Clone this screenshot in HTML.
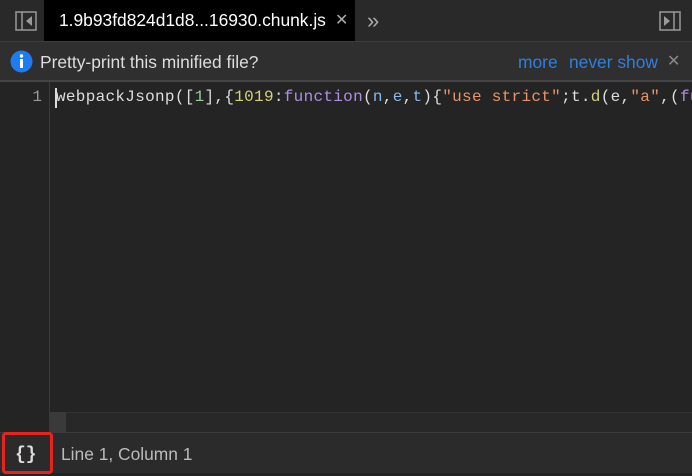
<!DOCTYPE html>
<html><head><style>
body{margin:0;width:692px;height:472px;overflow:hidden;background:#242424;font-family:"Segoe UI","Liberation Sans",sans-serif;position:relative}
.tabs{position:absolute;left:0;top:0;width:692px;height:41px;background:#292929;border-bottom:1px solid #3c3c3c}
.tab{position:absolute;left:44px;top:0;width:311px;height:41px;background:#000;color:#fff;font-size:17.4px;line-height:41px}
.info{position:absolute;left:0;top:42px;width:692px;height:38px;background:#2f2f2f;border-bottom:2px solid #454545;color:#ddd;font-size:17.4px;line-height:40px}
.gutter{position:absolute;left:0;top:82px;width:49px;height:350px;background:#242424;border-right:1px solid #3a3a3a}
.code{position:absolute;left:56px;top:88px;font-family:"Liberation Mono",monospace;font-size:16px;letter-spacing:0.3px;color:#ddd;white-space:pre}
.status{position:absolute;left:0;top:432px;width:692px;height:40px;background:#2b2b2b;border-top:1px solid #3c3c3c;color:#bbb;font-size:17.4px;line-height:42px}
</style></head><body>
<div class="tabs">
<svg style="position:absolute;left:15px;top:11px" width="22" height="20"><rect x="1" y="1" width="20" height="18" fill="none" stroke="#999" stroke-width="1.5"/><line x1="7" y1="1" x2="7" y2="19" stroke="#999" stroke-width="1.5"/><path d="M17 5 L11 10 L17 15Z" fill="#999"/></svg>
<div class="tab"><span style="position:absolute;left:15px">1.9b93fd824d1d8...16930.chunk.js</span><span style="position:absolute;left:291px;color:#aaa;font-size:16px">✕</span></div>
<span style="position:absolute;left:367px;top:8px;color:#aaa;font-size:22px">»</span>
<svg style="position:absolute;left:659px;top:11px" width="22" height="20"><rect x="1" y="1" width="20" height="18" fill="none" stroke="#999" stroke-width="1.5"/><line x1="15" y1="1" x2="15" y2="19" stroke="#999" stroke-width="1.5"/><path d="M5 5 L11 10 L5 15Z" fill="#999"/></svg>
</div>
<div class="info">
<svg style="position:absolute;left:10px;top:8px" width="23" height="23"><circle cx="11.5" cy="11.5" r="11" fill="#1e7bf0"/><rect x="10" y="9" width="3" height="9" fill="#fff"/><circle cx="11.5" cy="6" r="1.7" fill="#fff"/></svg>
<span style="position:absolute;left:40px">Pretty-print this minified file?</span>
<span style="position:absolute;left:518px;color:#2f7fdf">more</span>
<span style="position:absolute;left:569px;color:#2f7fdf">never show</span>
<span style="position:absolute;left:667px;color:#888;font-size:16px">✕</span>
</div>
<div class="gutter"><span style="position:absolute;right:7px;top:6px;font-family:'Liberation Mono',monospace;font-size:16px;color:#999">1</span></div>
<div style="position:absolute;left:55px;top:88px;width:2px;height:20px;background:#ddd"></div>
<div class="code"><span style="color:#ddd">webpackJsonp([</span><span style="color:#9acd9a">1</span>],{<span style="color:#d6d27a">1019</span>:<span style="color:#b08ee0">function</span>(<span style="color:#8ab8e8">n</span>,<span style="color:#8ab8e8">e</span>,<span style="color:#8ab8e8">t</span>){<span style="color:#e8946a">"use strict"</span>;t.<span style="color:#d6d27a">d</span>(e,<span style="color:#e8946a">"a"</span>,(<span style="color:#b08ee0">fu</span></div>
<div style="position:absolute;left:50px;top:412px;width:642px;height:20px;background:#282828;border-top:1px solid #333"></div>
<div style="position:absolute;left:50px;top:412px;width:16px;height:20px;background:#3a3a3a"></div>
<div class="status">
<div style="position:absolute;left:2px;top:-1px;width:45px;height:36px;border:3px solid #e8231e;border-radius:4px"></div>
<span style="position:absolute;left:15px;top:1px;font-family:'Liberation Mono',monospace;font-weight:bold;color:#ddd;font-size:18px">{}</span>
<span style="position:absolute;left:61px">Line 1, Column 1</span>
</div>
</body></html>
